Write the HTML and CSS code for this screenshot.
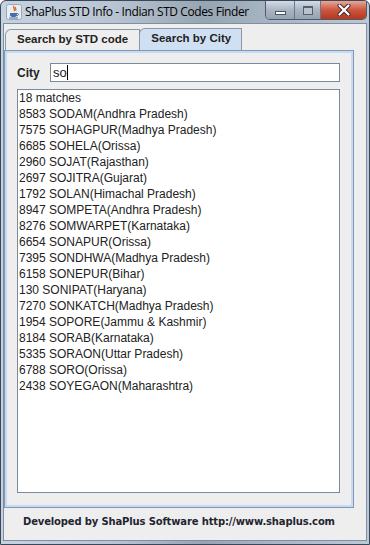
FILE: index.html
```html
<!DOCTYPE html>
<html lang="en">
<head>
    <meta charset="UTF-8">
    <title>ShaPlus STD Info - Indian STD Codes Finder</title>
    <link rel="stylesheet" href="styles.css">
</head>
<body>
    <div class="window">
        <div class="titlebar">
            <svg class="app-icon" width="16" height="16" viewBox="0 0 16 16">
                <rect x="0.5" y="0.5" width="15" height="15" rx="2" fill="#e8edf3" stroke="#9aa8b8"/>
                <path d="M8 2 C6 4 10 5 8 7 M9.5 3 C8.5 4.5 11 5 9.5 6.5" stroke="#e2621b" stroke-width="1.3" fill="none"/>
                <path d="M4 9 H11 V11 C11 12.5 9.5 13 7.5 13 C5.5 13 4 12.5 4 11 Z" fill="#4a6fa5"/>
                <path d="M11 9.5 C13 9.5 13 11.5 11 11.5" stroke="#4a6fa5" fill="none"/>
                <path d="M3 14 H12" stroke="#4a6fa5"/>
            </svg>
            <span class="title">ShaPlus STD Info - Indian STD Codes Finder</span>
            <div class="controls">
                <div class="ctl ctl-min"><span class="min-bar"></span></div>
                <div class="ctl ctl-max"><span class="max-box"></span></div>
                <div class="ctl ctl-close">
                    <svg width="14" height="12" viewBox="0 0 14 12">
                        <path d="M2.5 1.5 L11.5 10.5 M11.5 1.5 L2.5 10.5" stroke="#3a2a28" stroke-width="4" stroke-linecap="round"/>
                        <path d="M2.5 1.5 L11.5 10.5 M11.5 1.5 L2.5 10.5" stroke="#fff" stroke-width="2.2" stroke-linecap="round"/>
                    </svg>
                </div>
            </div>
        </div>

        <div class="client">
            <div class="tabs">
                <div class="tab">Search by STD code</div>
                <div class="tab active">Search by City</div>
            </div>
            <div class="panel">
                <div class="city-row">
                    <label for="city">City</label>
                    <div class="field" id="city">so<span class="caret"></span></div>
                </div>
                <div class="results">
                    <div>18 matches</div>
                    <div>8583 SODAM(Andhra Pradesh)</div>
                    <div>7575 SOHAGPUR(Madhya Pradesh)</div>
                    <div>6685 SOHELA(Orissa)</div>
                    <div>2960 SOJAT(Rajasthan)</div>
                    <div>2697 SOJITRA(Gujarat)</div>
                    <div>1792 SOLAN(Himachal Pradesh)</div>
                    <div>8947 SOMPETA(Andhra Pradesh)</div>
                    <div>8276 SOMWARPET(Karnataka)</div>
                    <div>6654 SONAPUR(Orissa)</div>
                    <div>7395 SONDHWA(Madhya Pradesh)</div>
                    <div>6158 SONEPUR(Bihar)</div>
                    <div>130 SONIPAT(Haryana)</div>
                    <div>7270 SONKATCH(Madhya Pradesh)</div>
                    <div>1954 SOPORE(Jammu &amp; Kashmir)</div>
                    <div>8184 SORAB(Karnataka)</div>
                    <div>5335 SORAON(Uttar Pradesh)</div>
                    <div>6788 SORO(Orissa)</div>
                    <div>2438 SOYEGAON(Maharashtra)</div>
                </div>
            </div>
            <div class="footer">Developed by ShaPlus Software http://www.shaplus.com</div>
        </div>
    </div>
</body>
</html>
```

FILE: styles.css
```css
body {
    margin: 0;
    font-family: 'Liberation Sans', Arial, sans-serif;
}
.window {
    width: 370px;
    height: 545px;
    box-sizing: border-box;
    border: 1px solid #39475a;
    border-radius: 6px 6px 0 0;
    background: linear-gradient(90deg, #c6d2df 0%, #b9c5d2 30%, #97a4b2 55%, #a9b6c4 75%, #bcc8d4 100%);
    display: flex;
    flex-direction: column;
}
.titlebar {
    height: 21px;
    display: flex;
    align-items: center;
    padding-left: 5px;
}
.app-icon {
    flex: none;
}
.title {
    margin-left: 3px;
    font-family: 'Open Sans', 'Noto Sans', sans-serif;
    font-size: 12px;
    color: #000;
    letter-spacing: -0.4px;
    white-space: nowrap;
}
.controls {
    margin-left: auto;
    margin-right: 2px;
    align-self: flex-start;
    display: flex;
    border: 1px solid #4e5a68;
    border-top: none;
    border-radius: 0 0 5px 5px;
    overflow: hidden;
}
.ctl {
    height: 18px;
    display: flex;
    align-items: center;
    justify-content: center;
    background: linear-gradient(#d3dbe5, #a9b5c3 50%, #96a3b2);
    border-left: 1px solid #6b7886;
}
.ctl-min {
    width: 28px;
    border-left: none;
}
.ctl-max {
    width: 25px;
}
.ctl-close {
    width: 45px;
    background: linear-gradient(#e8a899, #cc553f 50%, #b5381f);
}
.min-bar {
    width: 9px;
    height: 2px;
    background: #fff;
    border: 1px solid #4a5360;
    margin-top: 6px;
}
.max-box {
    width: 8px;
    height: 6px;
    border: 1px solid #555f6c;
    border-top-width: 2px;
    background: #b8c2cd;
}
.client {
    flex: 1;
    margin: 1px 2px 3px 2px;
    background: #eeeeee;
    border: 1px solid #7e8fa3;
    display: flex;
    flex-direction: column;
}
.tabs {
    display: flex;
    margin-top: 4px;
    padding-left: 1px;
    height: 22px;
    align-items: flex-end;
}
.tab {
    height: 21px;
    box-sizing: border-box;
    padding: 3px 11px 0 11px;
    font-size: 11.5px;
    font-weight: bold;
    color: #222;
    background: #eeeeee;
    border: 1px solid #8a97a6;
    border-bottom: none;
    border-radius: 6px 0 0 0;
    white-space: nowrap;
}
.tab.active {
    height: 22px;
    margin-left: -1px;
    background: #cfe0f2;
    padding: 3px 10px 0 11px;
    position: relative;
    z-index: 1;
}
.panel {
    width: 350px;
    height: 458px;
    box-sizing: border-box;
    border: 1px solid #8198b8;
    box-shadow: inset 0 0 0 2px #c6daf0;
    padding: 12px 13px 0 12px;
}
.city-row {
    display: flex;
    align-items: center;
    height: 19px;
}
.city-row label {
    width: 33px;
    font-size: 12px;
    font-weight: bold;
    color: #222;
}
.field {
    flex: 1;
    height: 19px;
    box-sizing: border-box;
    background: #fff;
    border: 1px solid #7a8a9b;
    font-size: 13px;
    padding: 1px 2px 0 2px;
    color: #222;
    line-height: 16px;
}
.caret {
    display: inline-block;
    width: 1px;
    height: 15px;
    background: #000;
    vertical-align: -3px;
}
.results {
    margin-top: 7px;
    height: 404px;
    box-sizing: border-box;
    background: #fff;
    border: 1px solid #7a8a9b;
    padding-left: 1px;
    font-size: 12px;
    line-height: 16px;
    color: #222;
}
.footer {
    margin-top: 8px;
    padding-left: 19px;
    font-family: 'DejaVu Sans', Tahoma, sans-serif;
    font-size: 10px;
    font-weight: bold;
    color: #1f2530;
    letter-spacing: -0.15px;
}
```
